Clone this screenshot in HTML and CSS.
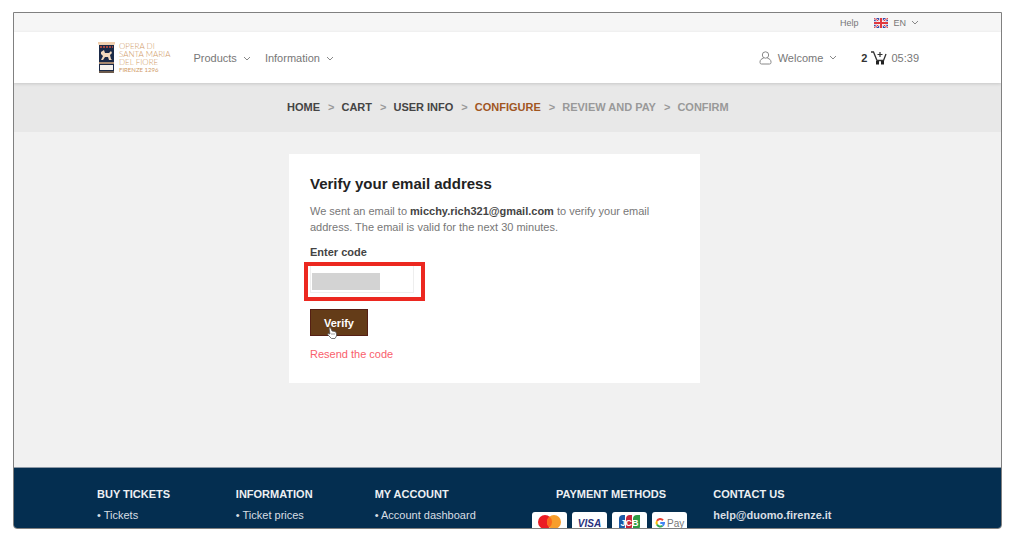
FILE: index.html
```html
<!DOCTYPE html>
<html lang="en">
  <head>
    <meta charset="UTF-8">
    <meta name="viewport" content="width=device-width, initial-scale=1.0">
    <title>Verify your email address</title>
    <link rel="stylesheet" href="styles.css">
  </head>
  <body>
    <div class="window">

      <div class="topbar">
        <div class="container">
          <a class="help" href="#">Help</a>
          <button class="lang" type="button">
            <svg class="flag" viewBox="0 0 28 20" aria-hidden="true">
              <rect width="28" height="20" fill="#3b4ba8"/>
              <path d="M0 0L28 20M28 0L0 20" stroke="#fff" stroke-width="4"/>
              <path d="M0 0L28 20M28 0L0 20" stroke="#e0383e" stroke-width="2"/>
              <path d="M14 0V20M0 10H28" stroke="#fff" stroke-width="7"/>
              <path d="M14 0V20M0 10H28" stroke="#e0383e" stroke-width="4"/>
            </svg>
            EN
            <svg class="chevron" viewBox="0 0 8 5" aria-hidden="true"><path d="M1 1L4 4L7 1"/></svg>
          </button>
        </div>
      </div>

      <header class="header">
        <div class="container">
          <a class="logo" href="#">
            <svg class="logo-mark" viewBox="0 0 17 31" aria-hidden="true">
              <path d="M0 0H17V2L16 3H1L0 2Z" fill="#f0cfae"/>
              <rect x="1" y="3" width="15" height="27" fill="#1b2a47"/>
              <path d="M2 5H15" stroke="#a5473f" stroke-width="2" stroke-dasharray="2 1"/>
              <path d="M3 10L6 8L7 11H11L13 9L14 11L12 13L13 17L14 18H11L10 15H7L5 18H3L5 14L3 12Z" fill="#f3d9bd"/>
              <rect x="1" y="20" width="15" height="2" fill="#a88a70"/>
              <rect x="2" y="23" width="13" height="5" fill="#f6f2ec"/>
              <rect x="1" y="29" width="15" height="2" fill="#6c5a4c"/>
            </svg>
            <span class="logo-text">
              OPERA DI<br>SANTA MARIA<br>DEL FIORE
              <small>FIRENZE 1296</small>
            </span>
          </a>
          <nav class="nav">
            <a href="#">Products <svg class="chevron" viewBox="0 0 8 5" aria-hidden="true"><path d="M1 1L4 4L7 1"/></svg></a>
            <a href="#">Information <svg class="chevron" viewBox="0 0 8 5" aria-hidden="true"><path d="M1 1L4 4L7 1"/></svg></a>
          </nav>
          <a class="account" href="#">
            <svg class="user" viewBox="0 0 13 14" aria-hidden="true">
              <circle cx="6.5" cy="4" r="3.2"/>
              <path d="M4.600 7.200C2.300 7.800 1 9 1 11V11.500Q1 13 2.500 13H10.500Q12 13 12 11.500V11C12 9 10.700 7.800 8.400 7.200"/>
            </svg>
            Welcome
            <svg class="chevron" viewBox="0 0 8 5" aria-hidden="true"><path d="M1 1L4 4L7 1"/></svg>
          </a>
          <a class="cart" href="#">
            <b>2</b>
            <svg class="cart-icon" viewBox="0 0 16 14" aria-hidden="true">
              <path d="M0 1H2.500L6 9.500H12.500L15 3" fill="none" stroke="#333" stroke-width="1.3"/>
              <path d="M9 1V6M6.500 3.500H11.500" stroke="#333" stroke-width="1.2"/>
              <rect x="5" y="10" width="3" height="3.500" fill="#222"/>
              <rect x="10" y="10" width="3" height="3.500" fill="#222"/>
            </svg>
            <span>05:39</span>
          </a>
        </div>
      </header>

      <nav class="steps">
        <ol>
          <li><a href="#">HOME</a></li>
          <li><a href="#">CART</a></li>
          <li><a href="#">USER INFO</a></li>
          <li class="current">CONFIGURE</li>
          <li class="next">REVIEW AND PAY</li>
          <li class="next">CONFIRM</li>
        </ol>
      </nav>

      <main class="main">
        <form class="card">
          <h1>Verify your email address</h1>
          <p>We sent an email to <b>micchy.rich321@gmail.com</b> to verify your email address. The email is valid for the next 30 minutes.</p>
          <label for="code">Enter code</label>
          <div class="code-field">
            <input type="text" id="code">
            <span class="mask"></span>
            <span class="highlight"></span>
          </div>
          <div class="verify">
            <button type="button">Verify</button>
            <svg class="pointer" viewBox="0 0 10 12" aria-hidden="true">
              <path d="M2 1Q3 0 4 1.500L5 4L8 4.500Q9.500 5 9.500 7V9L8 11.500H4.500L1 8Q0 6.500 1.500 6.500L3 7Z" fill="#fff" stroke="#555" stroke-width=".8"/>
              <path d="M5 6V8M7 6V8" stroke="#777" stroke-width=".7"/>
            </svg>
          </div>
          <a class="resend" href="#">Resend the code</a>
        </form>
      </main>

      <footer class="footer">
        <div class="container">
          <section>
            <h2>BUY TICKETS</h2>
            <a href="#">• Tickets</a>
          </section>
          <section>
            <h2>INFORMATION</h2>
            <a href="#">• Ticket prices</a>
          </section>
          <section>
            <h2>MY ACCOUNT</h2>
            <a href="#">• Account dashboard</a>
          </section>
          <section class="payment">
            <h2>PAYMENT METHODS</h2>
            <div class="pay-cards">
              <svg viewBox="0 0 35 22" role="img" aria-label="Mastercard">
                <circle cx="13" cy="10" r="7" fill="#eb1c24"/>
                <circle cx="22" cy="10" r="7" fill="#f79e2b"/>
                <path d="M17.500 4.600A7 7 0 0 1 17.500 15.400A7 7 0 0 1 17.500 4.600Z" fill="#fb6a1e"/>
              </svg>
              <svg viewBox="0 0 35 22" role="img" aria-label="Visa">
                <text x="17.500" y="15" text-anchor="middle" class="visa">VISA</text>
              </svg>
              <svg viewBox="0 0 35 22" role="img" aria-label="JCB">
                <path d="M7 18V7Q7 3 11 3H13V14Q13 18 9 18Z" fill="#1c5aa6"/>
                <path d="M14 18V7Q14 3 18 3H20V14Q20 18 16 18Z" fill="#c8243c"/>
                <path d="M21 18V7Q21 3 25 3H28V14Q28 18 24 18Z" fill="#2f9b45"/>
                <text x="17.500" y="14" text-anchor="middle" class="jcb">JCB</text>
              </svg>
              <svg viewBox="0 0 35 22" role="img" aria-label="Google Pay">
                <g fill="none" stroke-width="2">
                  <path d="M11 8.200A3.700 3.700 0 0 0 5 9" stroke="#ea4335"/>
                  <path d="M5 9A3.700 3.700 0 0 0 5 12.500" stroke="#fbbc05"/>
                  <path d="M5 12.500A3.700 3.700 0 0 0 10.500 13.800" stroke="#34a853"/>
                  <path d="M10.500 13.800A3.700 3.700 0 0 0 12 11H8.300" stroke="#4285f4"/>
                </g>
                <text x="15" y="15" class="gpay">Pay</text>
              </svg>
            </div>
          </section>
          <section>
            <h2>CONTACT US</h2>
            <a class="mail" href="#">help@duomo.firenze.it</a>
          </section>
        </div>
      </footer>

    </div>
  </body>
</html>
```
FILE: styles.css
```css
* {
  box-sizing: border-box;
}

body {
  display: flex;
  height: 100vh;
  margin: 0;
  padding: 12px 22px 16px 13px;
  background-color: white;
  color: #777;
  font-family: "Liberation Sans", Arial, sans-serif;
  font-size: 11px;
  line-height: 16px;
}

a {
  color: inherit;
  text-decoration: none;
}

h1, h2, p, ol {
  margin: 0;
  padding: 0;
}

button {
  font: inherit;
  cursor: pointer;
}

.window {
  display: flex;
  flex: 1;
  flex-direction: column;
  border: 1px solid #808080;
  border-radius: 0 0 4px 4px;
  background-color: #f1f1f1;
  overflow: hidden;
}

.container {
  display: flex;
  align-items: center;
  width: 100%;
  max-width: 988px;
  height: 100%;
  margin: 0 auto;
  padding: 0 82px 0 83px;
}

.chevron {
  width: 8px;
  height: 5px;
  fill: none;
  stroke: #888;
}

/* top bar */
.topbar {
  flex: none;
  height: 19px;
  background-color: #f6f6f6;
  font-size: 9px;
}

.topbar .container {
  justify-content: flex-end;
  gap: 16px;
}

.lang {
  display: flex;
  align-items: center;
  gap: 5px;
  padding: 0;
  border: 0;
  background: none;
  color: inherit;
}

.flag {
  width: 14px;
  height: 10px;
}

/* header */
.header {
  position: relative;
  flex: none;
  height: 51px;
  background-color: white;
  box-shadow: 0 1px 3px rgba(0, 0, 0, 0.15);
}

.logo {
  display: flex;
  gap: 4px;
  margin-left: 1px;
}

.logo-mark {
  width: 17px;
  height: 31px;
}

.logo-text {
  color: #d09a66;
  font-family: Lato, sans-serif;
  font-size: 8px;
  font-weight: 300;
  line-height: 8px;
}

.logo-text small {
  display: block;
  font-size: 6px;
  font-weight: 400;
}

.nav {
  display: flex;
  flex: 1;
  gap: 14px;
  margin-left: 23px;
}

.nav .chevron {
  margin: 0 0 1px 3px;
}

.account, .cart {
  display: flex;
  align-items: center;
}

.account {
  gap: 6px;
  margin-right: 24px;
}

.user {
  width: 13px;
  height: 14px;
  fill: none;
  stroke: #888;
}

.cart {
  gap: 4px;
}

.cart b {
  color: #333;
}

.cart-icon {
  width: 16px;
  height: 14px;
}

/* steps */
.steps {
  flex: none;
  height: 49px;
  padding: 16px 82px 0 273px;
  background-color: #e8e8e8;
  color: #444;
  font-weight: bold;
}

.steps ol {
  display: flex;
  list-style: none;
  white-space: nowrap;
}

.steps li + li::before {
  content: ">";
  margin: 0 7px 0 8px;
  color: #999;
}

.steps .current {
  color: #a0561f;
}

.steps .next {
  color: #999;
}

/* verify form */
.main {
  flex: 1;
  padding: 22px 82px 0 275px;
}

.card {
  max-width: 411px;
  padding: 20px 21px 21px;
  background-color: white;
}

.card h1 {
  color: #222;
  font-size: 15px;
  line-height: 20px;
}

.card p {
  margin-top: 9px;
}

.card p b, .card label {
  color: #444;
}

.card label {
  display: block;
  margin-top: 9px;
  font-weight: bold;
}

.code-field {
  position: relative;
  width: 104px;
  margin-top: 5px;
}

.code-field input {
  display: block;
  width: 100%;
  height: 28px;
  border: 1px solid #eee;
  background-color: white;
}

.mask {
  position: absolute;
  top: 8px;
  left: 2px;
  width: 68px;
  height: 17px;
  background-color: #d3d3d3;
}

.highlight {
  position: absolute;
  top: -3px;
  left: -6px;
  width: 121px;
  height: 39px;
  border: 4px solid #ec2820;
}

.verify {
  position: relative;
  margin: 16px 0 10px;
}

.verify button {
  display: block;
  width: 58px;
  height: 27px;
  padding: 0;
  border: 1px solid #551f14;
  background-color: #643c18;
  color: white;
  font-weight: bold;
}

.pointer {
  position: absolute;
  top: 18px;
  left: 17px;
  width: 10px;
  height: 12px;
}

.resend {
  color: #f9606c;
}

/* footer */
.footer {
  flex: none;
  height: 61px;
  border-top: 1px solid #8d99a6;
  background-color: #042e50;
  color: #d8dee4;
}

.footer .container {
  display: grid;
  grid-template-columns: 139fr 139fr 158fr 181fr 206fr;
  align-items: start;
  padding-top: 18px;
}

.footer h2 {
  margin-bottom: 5px;
  color: #edf0f3;
  font-size: 11px;
}

.payment {
  width: 157px;
}

.payment h2 {
  text-align: center;
}

.pay-cards {
  display: flex;
  gap: 5px;
  margin-top: 10px;
}

.pay-cards svg {
  width: 35px;
  height: 22px;
  border-radius: 3px;
  background-color: white;
}

.visa {
  fill: #28307c;
  font-size: 10px;
  font-style: italic;
  font-weight: bold;
}

.jcb {
  fill: white;
  font-size: 9px;
  font-weight: bold;
}

.gpay {
  fill: #777;
  font-size: 10px;
}

.mail {
  font-weight: bold;
}
```
